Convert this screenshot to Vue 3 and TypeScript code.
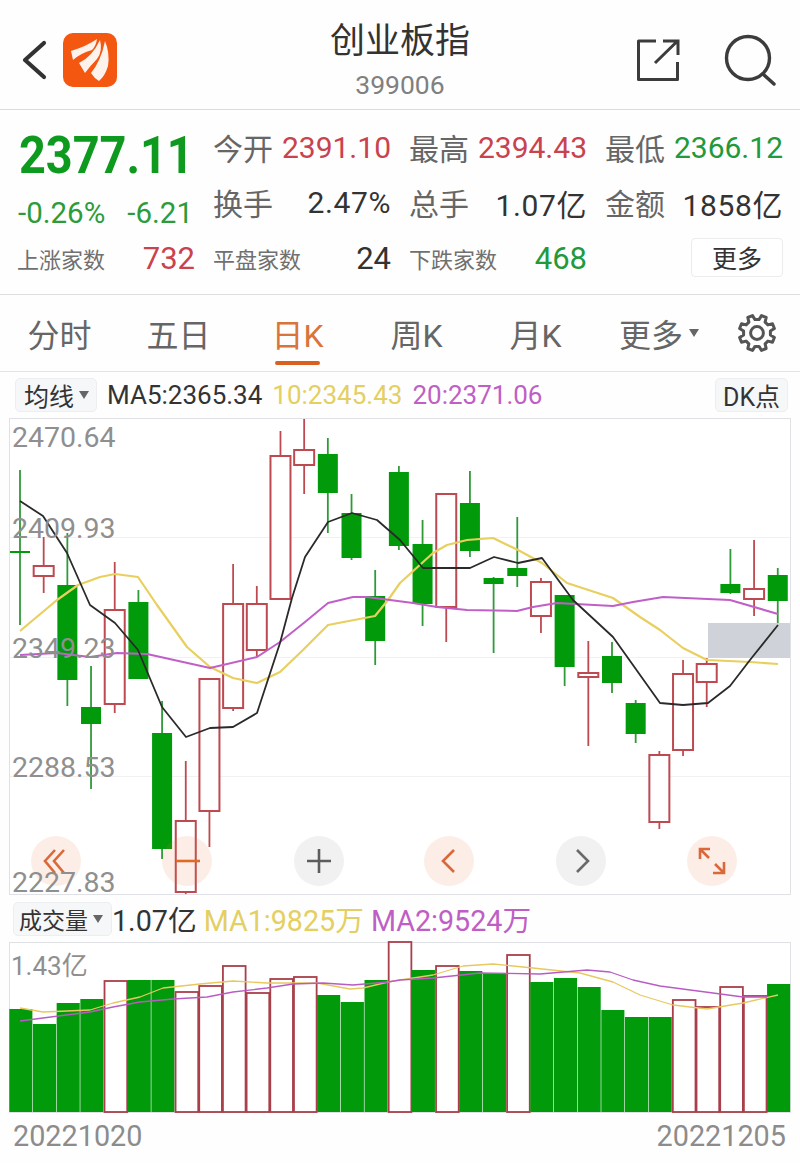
<script setup lang="ts">
import { computed } from 'vue'

type Candle = [number, number, number, number, 'r' | 'g']
interface VolBar { top: number; up: boolean }

const STEP = 23.68
const FIRST_X = 20

// high, low, body top, body bottom, colour
const candles: Candle[] = [
  [470, 625, 551, 553, 'g'], [537, 593, 566, 576, 'r'], [533, 706, 585, 680, 'g'],
  [666, 789, 707, 724, 'g'], [562, 713, 610, 704, 'r'], [590, 679, 602, 679, 'g'],
  [701, 859, 733, 849, 'g'], [761, 894, 821, 892, 'r'], [679, 847, 679, 811, 'r'],
  [564, 711, 604, 708, 'r'], [586, 656, 604, 650, 'r'], [431, 600, 456, 599, 'r'],
  [419, 494, 450, 465, 'r'], [438, 533, 454, 493, 'g'], [494, 560, 513, 558, 'g'],
  [570, 665, 596, 641, 'g'], [466, 550, 472, 546, 'g'], [520, 626, 544, 604, 'g'],
  [493, 642, 494, 607, 'r'], [471, 557, 503, 551, 'g'], [577, 653, 578, 584, 'g'],
  [517, 587, 568, 576, 'g'], [578, 633, 582, 616, 'r'], [595, 686, 595, 667, 'g'],
  [641, 746, 673, 677, 'r'], [642, 693, 656, 683, 'g'], [700, 743, 703, 734, 'g'],
  [751, 829, 755, 822, 'r'], [660, 756, 674, 750, 'r'], [658, 707, 664, 682, 'r'],
  [549, 594, 584, 593, 'g'], [540, 616, 589, 599, 'r'], [568, 623, 575, 601, 'g']
]

const volTops = [
  1009, 1024, 1003, 999, 981, 980, 980, 992, 986, 966, 993, 979, 977, 995, 1002, 980, 942,
  970, 966, 971, 974, 955, 982, 978, 987, 1010, 1017, 1017, 1000, 1007, 987, 996, 984
]
const volUp = [4, 7, 8, 9, 10, 11, 12, 16, 18, 21, 28, 29, 30, 31]
const volBars: VolBar[] = volTops.map((top, i) => ({ top, up: volUp.includes(i) }))

const ma5 = '20,501 43,516 67,553 90,605 115,623 138,650 162,707 186,737 210,728 233,727 257,713 280,643 292,598 305,557 328,522 352,513 377,520 400,540 423,568 470,568 494,557 518,563 542,558 573,600 613,637 660,703 683,705 708,703 730,686 750,660 778,625'
const ma10 = '20,631 57,600 78,585 100,577 115,574 138,577 157,605 187,647 210,667 233,678 257,683 280,672 303,650 328,625 375,616 388,600 400,583 433,553 447,545 467,540 493,538 518,550 542,563 567,583 613,598 640,617 660,630 683,648 707,660 750,662 778,664'
const ma20 = '20,655 57,653 90,657 117,653 147,654 210,668 257,657 280,642 305,622 328,603 353,597 367,597 413,603 437,607 467,610 517,611 533,607 557,603 613,606 633,602 663,597 730,600 778,614'
const volMa1 = '20,1008 43,1012 90,1010 113,1003 140,997 163,988 200,984 233,981 267,983 317,983 350,989 363,988 388,982 400,980 433,975 463,966 493,964 533,968 580,973 613,982 640,995 673,1005 707,1009 743,1003 778,995'
const volMa2 = '20,1021 43,1018 90,1012 113,1007 140,1002 173,999 207,997 233,992 267,988 293,984 323,983 353,985 388,982 400,980 433,978 480,973 540,974 587,970 610,972 633,980 660,986 713,993 743,997 767,997'

const axisLabels = [
  { text: '2470.64', y: 447 },
  { text: '2409.93', y: 538 },
  { text: '2349.23', y: 658 },
  { text: '2288.53', y: 777 },
  { text: '2227.83', y: 892 }
]

const stats = [
  [
    { label: '今开', value: '2391.10', tone: 'up' },
    { label: '最高', value: '2394.43', tone: 'up' },
    { label: '最低', value: '2366.12', tone: 'down' }
  ],
  [
    { label: '换手', value: '2.47%', tone: 'plain' },
    { label: '总手', value: '1.07亿', tone: 'plain' },
    { label: '金额', value: '1858亿', tone: 'plain' }
  ]
]

const counts = [
  { label: '上涨家数', value: '732', tone: 'up' },
  { label: '平盘家数', value: '24', tone: '' },
  { label: '下跌家数', value: '468', tone: 'down' }
]

const tabs = ['分时', '五日', '日K', '周K', '月K']

function candleX(i: number): number {
  return FIRST_X + i * STEP
}

// eight toothed gear outline
const gearPath = computed(() => {
  const pts: string[] = []
  const teeth = 8
  for (let i = 0; i < teeth; i++) {
    const a = (i / teeth) * Math.PI * 2 + Math.PI / 8
    const w = Math.PI / teeth
    const at = (r: number, t: number) =>
      `${(r * Math.cos(t)).toFixed(1)},${(r * Math.sin(t)).toFixed(1)}`
    pts.push(at(13.6, a - w * 0.62), at(18, a - w * 0.36), at(18, a + w * 0.36), at(13.6, a + w * 0.62))
  }
  return `M${pts.join(' L')} Z`
})
</script>

<template>
  <div class="page">
    <header class="top">
      <div class="top-left">
        <svg class="back" width="26" height="40" viewBox="0 0 26 40">
          <path d="M23 3 L4 20 L23 37" fill="none" stroke="#333" stroke-width="4.2" stroke-linecap="round" stroke-linejoin="round" />
        </svg>
        <svg class="logo" width="54" height="54" viewBox="0 0 54 54">
          <rect width="54" height="54" rx="10" fill="#f4570f" />
          <path d="M8 18 Q24 13 34 6 Q33 13 29 17 Q18 20 10 27 Z" fill="#fdf3ec" />
          <path d="M16 30 Q29 24 37 7 Q40 18 34 26 Q28 32 22 40 Z" fill="#fdf3ec" />
          <path d="M42 8 Q47 20 45 33 Q42 43 36 48 Q31 45 28 40 Q38 28 42 8 Z" fill="#fdf3ec" />
        </svg>
      </div>
      <div class="top-title">
        <div class="name">创业板指</div>
        <div class="code">399006</div>
      </div>
      <div class="top-right">
        <svg width="44" height="44" viewBox="0 0 44 44">
          <path d="M20 3 H2.5 V41.5 H41.5 V24" fill="none" stroke="#3c3c3c" stroke-width="3" stroke-linejoin="round" />
          <path d="M19 25 L41 3.5 M27 3 H42 V17" fill="none" stroke="#3c3c3c" stroke-width="3" />
        </svg>
        <svg width="52" height="52" viewBox="0 0 52 52">
          <circle cx="24" cy="24" r="21.5" fill="none" stroke="#3c3c3c" stroke-width="3.4" />
          <path d="M39 40 L50 50" stroke="#3c3c3c" stroke-width="3.4" stroke-linecap="round" />
        </svg>
      </div>
    </header>

    <section class="stats">
      <div class="price">2377.11</div>
      <div v-for="cell in stats[0]" :key="cell.label" class="cell">
        <span class="cell-label">{{ cell.label }}</span>
        <span class="cell-value" :class="cell.tone">{{ cell.value }}</span>
      </div>
      <div class="change">
        <span>-0.26%</span>
        <span>-6.21</span>
      </div>
      <div v-for="cell in stats[1]" :key="cell.label" class="cell">
        <span class="cell-label">{{ cell.label }}</span>
        <span class="cell-value" :class="cell.tone">{{ cell.value }}</span>
      </div>
      <div v-for="cell in counts" :key="cell.label" class="cell">
        <span class="count-label">{{ cell.label }}</span>
        <span class="cell-value count-value" :class="cell.tone">{{ cell.value }}</span>
      </div>
      <div class="more-wrap">
        <button class="more-btn" type="button">更多</button>
      </div>
    </section>

    <nav class="tabs">
      <div v-for="tab in tabs" :key="tab" class="tab" :class="{ active: tab === '日K' }">{{ tab }}</div>
      <div class="tab tab-more">更多<i class="caret"></i></div>
      <div class="gear">
        <svg width="42" height="42" viewBox="-21 -21 42 42">
          <path :d="gearPath" fill="none" stroke="#555" stroke-width="3" stroke-linejoin="round" />
          <circle r="6.4" fill="none" stroke="#555" stroke-width="3" />
        </svg>
      </div>
    </nav>

    <div class="legend">
      <div class="chip">均线<i class="caret small"></i></div>
      <span class="ma-black">MA5:2365.34</span>
      <span class="ma-yellow">10:2345.43</span>
      <span class="ma-purple">20:2371.06</span>
      <div class="chip dk">DK点</div>
    </div>

    <svg class="kline" width="800" height="477" viewBox="0 418 800 477">
      <rect x="9.5" y="418.5" width="781" height="476" fill="#fff" stroke="#dfe1e4" />
      <path d="M10 537.5 H790 M10 657.5 H790 M10 776.5 H790" stroke="#f1f1f1" />
      <rect x="708" y="623" width="82" height="35" fill="#cfd2d8" />

      <g v-for="(c, i) in candles" :key="i">
        <line :x1="candleX(i)" :x2="candleX(i)" :y1="c[0]" :y2="c[1]" :stroke="c[4] === 'r' ? '#bd4a50' : '#2f9a38'" stroke-width="1.8" />
        <rect
          v-if="c[4] === 'r'"
          :x="candleX(i) - 10"
          :y="c[2]"
          width="20"
          :height="c[3] - c[2]"
          fill="#fff"
          stroke="#bd4a50"
          stroke-width="2"
        />
        <rect v-else :x="candleX(i) - 10" :y="c[2]" width="20" :height="c[3] - c[2]" fill="#009a0a" />
      </g>

      <polyline :points="ma10" class="line" stroke="#e8cf5e" stroke-width="2.2" />
      <polyline :points="ma20" class="line" stroke="#c05fc8" stroke-width="2" />
      <polyline :points="ma5" class="line" stroke="#2a2a2a" stroke-width="1.8" />

      <circle cx="56" cy="861" r="25" fill="#e8743a" fill-opacity="0.12" />
      <path d="M55 850 L45 861 L55 873 M64 850 L54 861 L64 873" class="ctl" stroke="#d9683a" />
      <circle cx="187" cy="861" r="25" fill="#e8743a" fill-opacity="0.12" />
      <path d="M176 861 H200" class="ctl" stroke="#dd6a28" />
      <circle cx="319" cy="861" r="25" fill="#f1f1f1" />
      <path d="M307 861 H331 M319 849 V873" class="ctl" stroke="#5d5d5d" />
      <circle cx="449" cy="861" r="25" fill="#e8743a" fill-opacity="0.12" />
      <path d="M454 850 L443 861 L454 872" class="ctl" stroke="#d9683a" />
      <circle cx="581" cy="861" r="25" fill="#f1f1f1" />
      <path d="M577 850 L588 861 L577 872" class="ctl" stroke="#6a6a6a" />
      <circle cx="712" cy="861" r="25" fill="#e8743a" fill-opacity="0.12" />
      <path d="M701 850 L709 858 M700 859 V849 H710 M715 864 L723 872 M724 862 V873 H713" class="ctl" stroke="#d9683a" />

      <text v-for="l in axisLabels" :key="l.text" x="12" :y="l.y" class="axis">{{ l.text }}</text>
    </svg>

    <div class="legend vol-legend">
      <div class="chip vol-chip">成交量<i class="caret small"></i></div>
      <span class="ma-black">1.07亿</span>
      <span class="ma-yellow">MA1:9825万</span>
      <span class="ma-purple">MA2:9524万</span>
    </div>

    <svg class="vol" width="800" height="171" viewBox="0 942 800 171">
      <rect x="9.5" y="942.5" width="781" height="170" fill="#fff" stroke="#dfe1e4" />
      <text x="11" y="975" class="axis vol-axis">1.43亿</text>
      <g v-for="(b, i) in volBars" :key="i">
        <rect
          v-if="b.up"
          :x="9 + i * STEP + 0.8"
          :y="b.top"
          :width="STEP - 1"
          :height="1112 - b.top"
          fill="#fff"
          stroke="#a83f4a"
          stroke-width="1.8"
        />
        <rect v-else :x="9 + i * STEP + 0.3" :y="b.top" :width="STEP - 0.6" :height="1112 - b.top" fill="#009a0a" />
      </g>
      <polyline :points="volMa1" class="line" stroke="#e8c860" stroke-width="1.3" />
      <polyline :points="volMa2" class="line" stroke="#b85cc4" stroke-width="1.3" />
    </svg>

    <footer class="dates">
      <span>20221020</span>
      <span>20221205</span>
    </footer>
  </div>
</template>

<style scoped>
.page {
  position: relative;
  width: 800px;
  height: 1163px;
  overflow: hidden;
  background: #fefefe;
  color: #333;
  font-family: Roboto, "Noto Sans CJK SC", sans-serif;
}

.top {
  display: grid;
  grid-template-columns: 1fr auto 1fr;
  align-items: center;
  height: 110px;
  box-sizing: border-box;
  padding-top: 10px;
  border-bottom: 1px solid #dcdcdc;
}

.top-left {
  display: flex;
  align-items: center;
  gap: 16px;
  padding-left: 21px;
}

.top-title {
  align-self: start;
  margin-top: 7px;
  text-align: center;
}

.name {
  font-size: 35px;
  line-height: 50px;
  color: #333;
}

.code {
  font-size: 26.5px;
  line-height: 36px;
  color: #808080;
}

.top-right {
  display: flex;
  justify-content: flex-end;
  align-items: center;
  gap: 44px;
  padding-right: 24px;
}

.stats {
  display: grid;
  grid-template-columns: repeat(4, 178px);
  grid-auto-rows: 55.5px;
  column-gap: 18px;
  height: 185px;
  box-sizing: border-box;
  padding: 9px 0 0 17px;
  border-bottom: 1px solid #dfdfdf;
}

.price {
  align-self: end;
  margin: 0 0 -8px 2px;
  color: #0d9a1f;
  font-size: 52px;
  font-weight: 700;
  line-height: 54px;
  transform: scaleX(0.9);
  transform-origin: left center;
}

.change {
  display: flex;
  justify-content: space-between;
  align-self: center;
  margin: 22px 2px 0 1px;
  color: #2c9c3a;
  font-size: 29.5px;
  line-height: 34px;
}

.cell {
  display: flex;
  justify-content: space-between;
  align-items: center;
}

.cell-label {
  color: #666;
  font-size: 30px;
}

.cell-value {
  color: #333;
  font-size: 30px;
  padding-top: 1px;
}

.plain {
  letter-spacing: 0.6px;
}

.count-label {
  color: #707070;
  font-size: 22px;
}

.count-value {
  font-size: 31px;
}

.up {
  color: #c9424d;
}

.down {
  color: #22993a;
}

.more-wrap {
  display: flex;
  justify-content: flex-end;
  align-items: center;
}

.more-btn {
  width: 92px;
  height: 39px;
  padding: 0 0 3px;
  border: 1px solid #ececec;
  border-radius: 4px;
  background: #fff;
  color: #333;
  font: inherit;
  font-size: 25px;
}

.tabs {
  display: flex;
  height: 77px;
  box-sizing: border-box;
  border-bottom: 1px solid #e4e4e4;
}

.tab {
  position: relative;
  display: flex;
  justify-content: center;
  align-items: center;
  width: 119px;
  color: #666;
  font-size: 32px;
}

.tab-more {
  padding-left: 9px;
  box-sizing: border-box;
}

.tab.active {
  color: #d9743a;
}

.tab.active::after {
  content: "";
  position: absolute;
  left: 37px;
  bottom: 6px;
  width: 45px;
  height: 4px;
  border-radius: 2px;
  background: #d9601f;
}

.caret {
  display: inline-block;
  width: 0;
  height: 0;
  margin-left: 6px;
  border-top: 8px solid #666;
  border-left: 5.5px solid transparent;
  border-right: 5.5px solid transparent;
}

.caret.small {
  margin-left: 5px;
  border-top-width: 8px;
  border-left-width: 5px;
  border-right-width: 5px;
}

.gear {
  display: flex;
  flex: 1;
  justify-content: center;
  align-items: center;
}

.legend {
  display: flex;
  align-items: center;
  gap: 10px;
  height: 46px;
  padding-left: 15px;
  font-size: 26px;
  white-space: nowrap;
}

.chip {
  display: flex;
  align-items: center;
  height: 34px;
  box-sizing: border-box;
  padding: 0 7px 0 8px;
  border: 1px solid #eceef0;
  border-radius: 5px;
  background: #f6f7f8;
  color: #333;
  font-size: 25px;
}

.dk {
  position: absolute;
  left: 715px;
  padding: 0 7px;
}

.ma-black {
  color: #333;
}

.ma-yellow {
  color: #e3cf62;
}

.ma-purple {
  color: #bf5fc6;
}

.kline,
.vol {
  display: block;
  overflow: visible;
}

.line {
  fill: none;
  stroke-linejoin: round;
}

.ctl {
  fill: none;
  stroke-width: 2.6;
}

.axis {
  fill: #8f8f8f;
  font-size: 28.5px;
}

.vol-axis {
  font-size: 26px;
}

.vol-legend {
  gap: 7px;
  height: 47px;
  padding-left: 13px;
  font-size: 28.7px;
}

.vol-chip {
  margin-right: -7px;
  padding: 0 8px 0 5px;
  font-size: 23px;
}

.dates {
  display: flex;
  justify-content: space-between;
  padding: 6px 14px 0 13px;
  color: #8c8c8c;
  font-size: 28.8px;
}
</style>
